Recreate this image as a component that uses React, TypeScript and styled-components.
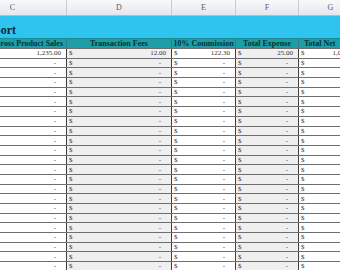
import React from 'react';
import styled, { createGlobalStyle } from 'styled-components';

const GlobalStyle = createGlobalStyle`
  html, body {
    margin: 0;
    padding: 0;
    background: #ffffff;
    overflow: hidden;
  }
  body {
    font-family: "Liberation Serif", "DejaVu Serif", serif;
  }
`;

const Viewport = styled.div`
  width: 340px;
  height: 270px;
  overflow: hidden;
  background: #ffffff;
`;

const Sheet = styled.div`
  margin-left: -41px;
  width: 420px;
`;

const Row = styled.div`
  display: grid;
  grid-template-columns: 108px 105px 64px 63px 64px 16px;
`;

const LetterRow = styled(Row)`
  height: 16px;
  box-sizing: border-box;
  background: linear-gradient(#f8f9fb, #e3e7ed);
  border-bottom: 1px solid #b7bdc6;
`;

const Letter = styled.div`
  display: flex;
  align-items: center;
  justify-content: center;
  border-right: 1px solid #c6cbd3;
  font-size: 8px;
  color: #5c5c5c;
`;

const TitleBand = styled.div`
  height: 22px;
  background: #2fc4ef;
  display: flex;
  align-items: flex-end;
  overflow: hidden;
`;

const Title = styled.div`
  width: 200px;
  margin-left: -143px;
  padding-bottom: 1px;
  text-align: right;
  white-space: nowrap;
  font-size: 12px;
  font-weight: bold;
  line-height: 13px;
  color: #112a31;
`;

const HeaderRow = styled(Row)`
  height: 9px;
  background: #1c9fa9;
  border-top: 1px solid #178a93;
`;

const HeaderCell = styled.div<{ $align?: string }>`
  display: flex;
  align-items: center;
  justify-content: ${(p) => p.$align || 'center'};
  padding: 0 ${(p) => (p.$align === 'flex-end' ? '3px' : '5px')};
  border-right: 1px solid #2f7f86;
  font-size: 8px;
  font-weight: bold;
  line-height: 9px;
  color: #0a3136;
  white-space: nowrap;
  overflow: hidden;
`;

const DataRow = styled(Row)`
  height: 9.7px;
  box-sizing: border-box;
  border-top: 1px solid #6e6e6e;
`;

const Cell = styled.div<{ $shade?: boolean; $right?: boolean }>`
  display: flex;
  align-items: center;
  justify-content: ${(p) => (p.$right ? 'flex-end' : 'space-between')};
  padding: 0 5px 0 2px;
  background: ${(p) => (p.$shade ? '#efefef' : '#ffffff')};
  border-right: 1px solid #3f3f3f;
  font-size: 7px;
  line-height: 8px;
  color: #333333;
  white-space: nowrap;
  overflow: hidden;
`;

const Dash = styled.span`
  margin-right: 5px;
`;

type Line = { sales: string; fees: string; commission: string; expense: string; net: string };

const lines: Line[] = [
  { sales: '1,235.00', fees: '12.00', commission: '122.30', expense: '25.00', net: '1,075.70' },
  ...Array.from({ length: 23 }, () => ({ sales: '-', fees: '-', commission: '-', expense: '-', net: '-' })),
];

const Amount: React.FC<{ value: string }> = ({ value }) =>
  value === '-' ? <Dash>-</Dash> : <span>{value}</span>;

const Money: React.FC<{ value: string; shade?: boolean }> = ({ value, shade }) => (
  <Cell $shade={shade}>
    <span>$</span>
    <Amount value={value} />
  </Cell>
);

const App: React.FC = () => {
  return (
    <Viewport>
      <GlobalStyle />
      <Sheet>
        <LetterRow>
          <Letter>C</Letter>
          <Letter>D</Letter>
          <Letter>E</Letter>
          <Letter>F</Letter>
          <Letter>G</Letter>
          <Letter />
        </LetterRow>
        <TitleBand>
          <Title>Sales Report</Title>
        </TitleBand>
        <HeaderRow>
          <HeaderCell $align="flex-end">Gross Product Sales</HeaderCell>
          <HeaderCell>Transaction Fees</HeaderCell>
          <HeaderCell>10% Commission</HeaderCell>
          <HeaderCell>Total Expense</HeaderCell>
          <HeaderCell $align="flex-start">Total Net</HeaderCell>
          <HeaderCell />
        </HeaderRow>
        {lines.map((line, i) => (
          <DataRow key={i}>
            <Cell $right>
              <Amount value={line.sales} />
            </Cell>
            <Money value={line.fees} shade />
            <Money value={line.commission} />
            <Money value={line.expense} shade />
            <Money value={line.net} />
            <Cell />
          </DataRow>
        ))}
      </Sheet>
    </Viewport>
  );
};

export default App;
